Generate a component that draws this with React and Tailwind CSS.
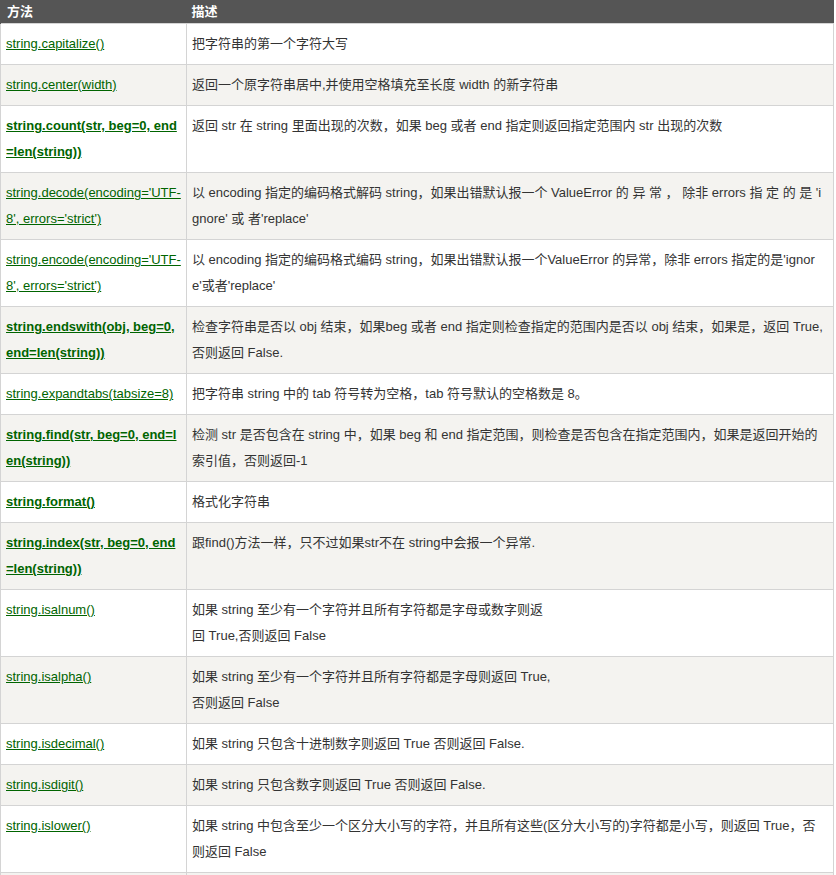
import React from "react";

const rows = [
  { m: ["string.capitalize()"], d: ["把字符串的第一个字符大写"] },
  { m: ["string.center(width)"], d: ["返回一个原字符串居中,并使用空格填充至长度 width 的新字符串"] },
  { m: ["string.count(str, beg=0, end", "=len(string))"], bold: true, d: ["返回 str 在 string 里面出现的次数，如果 beg 或者 end 指定则返回指定范围内 str 出现的次数"] },
  { m: ["string.decode(encoding='UTF-", "8', errors='strict')"], d: ["以 encoding 指定的编码格式解码 string，如果出错默认报一个 ValueError 的 异 常 ， 除非 errors 指 定 的 是 'i", "gnore' 或 者'replace'"] },
  { m: ["string.encode(encoding='UTF-", "8', errors='strict')"], d: ["以 encoding 指定的编码格式编码 string，如果出错默认报一个ValueError 的异常，除非 errors 指定的是'ignor", "e'或者'replace'"] },
  { m: ["string.endswith(obj, beg=0,", "end=len(string))"], bold: true, d: ["检查字符串是否以 obj 结束，如果beg 或者 end 指定则检查指定的范围内是否以 obj 结束，如果是，返回 True,", "否则返回 False."] },
  { m: ["string.expandtabs(tabsize=8)"], d: ["把字符串 string 中的 tab 符号转为空格，tab 符号默认的空格数是 8。"] },
  { m: ["string.find(str, beg=0, end=l", "en(string))"], bold: true, d: ["检测 str 是否包含在 string 中，如果 beg 和 end 指定范围，则检查是否包含在指定范围内，如果是返回开始的", "索引值，否则返回-1"] },
  { m: ["string.format()"], bold: true, d: ["格式化字符串"] },
  { m: ["string.index(str, beg=0, end", "=len(string))"], bold: true, d: ["跟find()方法一样，只不过如果str不在 string中会报一个异常."] },
  { m: ["string.isalnum()"], d: ["如果 string 至少有一个字符并且所有字符都是字母或数字则返", "回 True,否则返回 False"] },
  { m: ["string.isalpha()"], d: ["如果 string 至少有一个字符并且所有字符都是字母则返回 True,", "否则返回 False"] },
  { m: ["string.isdecimal()"], d: ["如果 string 只包含十进制数字则返回 True 否则返回 False."] },
  { m: ["string.isdigit()"], d: ["如果 string 只包含数字则返回 True 否则返回 False."] },
  { m: ["string.islower()"], d: ["如果 string 中包含至少一个区分大小写的字符，并且所有这些(区分大小写的)字符都是小写，则返回 True，否", "则返回 False"] },
  { m: [""], d: [""] },
];

const Lines = ({ lines }) =>
  lines.map((l, i) => (
    <React.Fragment key={i}>
      {i > 0 && <br />}
      {l}
    </React.Fragment>
  ));

export default function App() {
  return (
    <div className="bg-white h-[875px] overflow-hidden" style={{ fontFamily: '"Liberation Sans", "Noto Sans CJK SC", sans-serif' }}>
      <table className="table-fixed border-collapse w-[834px] text-[13px] leading-[26px] text-[#333]">
        <colgroup>
          <col className="w-[186px]" />
          <col />
        </colgroup>
        <thead>
          <tr className="bg-[#555] h-[23px]">
            <th className="text-left text-white font-bold px-[6px] py-0 leading-[23px] border-l border-[#555]">方法</th>
            <th className="text-left text-white font-bold px-[5px] py-0 leading-[23px]">描述</th>
          </tr>
        </thead>
        <tbody>
          {rows.map((r, i) => (
            <tr key={i} className={i % 2 === 1 ? "bg-[#f4f3f0]" : "bg-white"}>
              <td className="align-top border border-[#d4d4d4] px-[5px] py-[7px] whitespace-nowrap">
                <a href="#" className={`text-[#006400] underline ${r.bold ? "font-bold" : ""}`}>
                  <Lines lines={r.m} />
                </a>
              </td>
              <td className="align-top border border-[#d4d4d4] px-[5px] py-[7px] whitespace-nowrap">
                <Lines lines={r.d} />
              </td>
            </tr>
          ))}
        </tbody>
      </table>
    </div>
  );
}
